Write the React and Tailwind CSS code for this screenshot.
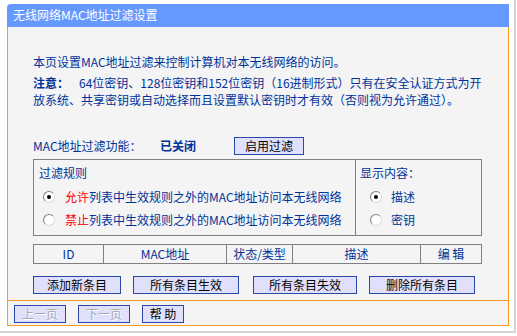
import React, { useState } from "react";

function Radio({ checked, onClick }) {
  return (
    <span
      onClick={onClick}
      className="relative inline-block w-[12px] h-[12px] rounded-full bg-white border border-[#808080] border-r-[#dcdcdc] border-b-[#dcdcdc] shrink-0"
    >
      {checked && (
        <span className="absolute left-[3px] top-[3px] w-[4px] h-[4px] rounded-full bg-black" />
      )}
    </span>
  );
}

function Btn({ children, className = "", disabled }) {
  return (
    <button
      className={
        "h-[18px] border border-[#2a48a8] bg-[#e0e0fc] text-[12px] leading-[16px] p-0 " +
        (disabled ? "text-[#a8a8b8] [text-shadow:1px_1px_0_#ffffff] " : "text-black ") +
        className
      }
    >
      {children}
    </button>
  );
}

export default function App() {
  const [rule, setRule] = useState("allow");
  const [show, setShow] = useState("desc");

  return (
    <div className="w-[517px] h-[336px] bg-white font-['Noto_Sans_CJK_SC',sans-serif] text-[12px] text-[#003399]">
      <div className="w-[516px] h-[333px] border-r-2 border-b-2 border-[#d6d6d6] pt-[4px] pl-[7px]">
        <div className="w-[502px]">
          {/* title bar */}
          <div className="h-[23px] bg-[#6699ff] rounded-tl-[4px] text-white pl-[6px] leading-[22px]">
            无线网络MAC地址过滤设置
          </div>

          {/* body */}
          <div className="h-[299px] border-x border-b border-[#ff9b1f] bg-[#f4f4f4]">
            <div className="h-[273px] pl-[25px] pt-[26px]">
              <div className="leading-[17px] whitespace-nowrap">
                本页设置MAC地址过滤来控制计算机对本无线网络的访问。
              </div>
              <div className="mt-[4px] leading-[17px] whitespace-nowrap">
                <b className="inline-block w-[46px]">注意：</b>
                64位密钥、128位密钥和152位密钥（16进制形式）只有在安全认证方式为开
                <br />
                放系统、共享密钥或自动选择而且设置默认密钥时才有效（否则视为允许通过）。
              </div>

              <div className="mt-[29px] h-[18px] flex items-center">
                <span className="w-[127px]">MAC地址过滤功能：</span>
                <b className="w-[74px]">已关闭</b>
                <Btn className="w-[70px]">启用过滤</Btn>
              </div>

              {/* rules box */}
              <div className="mt-[4px] w-[449px] h-[77px] flex border border-[#808080]">
                <div className="w-[322px] border-r border-[#808080] pl-[5px] pt-[4px]">
                  <div className="leading-[17px]">过滤规则</div>
                  <div className="mt-[7px] flex items-center h-[17px] pl-[4px]">
                    <Radio checked={rule === "allow"} onClick={() => setRule("allow")} />
                    <span className="ml-[10px]">
                      <span className="text-[#ff0000]">允许</span>列表中生效规则之外的MAC地址访问本无线网络
                    </span>
                  </div>
                  <div className="mt-[6px] flex items-center h-[17px] pl-[4px]">
                    <Radio checked={rule === "deny"} onClick={() => setRule("deny")} />
                    <span className="ml-[10px]">
                      <span className="text-[#ff0000]">禁止</span>列表中生效规则之外的MAC地址访问本无线网络
                    </span>
                  </div>
                </div>
                <div className="flex-1 pl-[4px] pt-[4px]">
                  <div className="leading-[17px]">显示内容：</div>
                  <div className="mt-[7px] flex items-center h-[17px] pl-[10px]">
                    <Radio checked={show === "desc"} onClick={() => setShow("desc")} />
                    <span className="ml-[9px]">描述</span>
                  </div>
                  <div className="mt-[6px] flex items-center h-[17px] pl-[10px]">
                    <Radio checked={show === "key"} onClick={() => setShow("key")} />
                    <span className="ml-[9px]">密钥</span>
                  </div>
                </div>
              </div>

              {/* entry table header */}
              <div className="mt-[8px] w-[449px] h-[20px] flex border border-[#808080] text-center leading-[18px]">
                <div className="w-[70px] border-r border-[#808080]">ID</div>
                <div className="w-[123px] border-r border-[#808080]">MAC地址</div>
                <div className="w-[66px] border-r border-[#808080]">状态/类型</div>
                <div className="w-[128px] border-r border-[#808080]">描述</div>
                <div className="flex-1">编 辑</div>
              </div>

              <div className="mt-[12px] flex">
                <Btn className="w-[88px]">添加新条目</Btn>
                <Btn className="w-[106px] ml-[12px]">所有条目生效</Btn>
                <Btn className="w-[104px] ml-[14px]">所有条目失效</Btn>
                <Btn className="w-[106px] ml-[12px]">删除所有条目</Btn>
              </div>
            </div>

            <div className="h-px bg-[#ff9b1f]" />

            <div className="h-[24px] flex items-center pl-[6px] pt-[1px]">
              <Btn disabled className="w-[52px]">上一页</Btn>
              <Btn disabled className="w-[52px] ml-[12px]">下一页</Btn>
              <Btn className="w-[42px] ml-[12px]">帮 助</Btn>
            </div>
          </div>
        </div>
      </div>
    </div>
  );
}
